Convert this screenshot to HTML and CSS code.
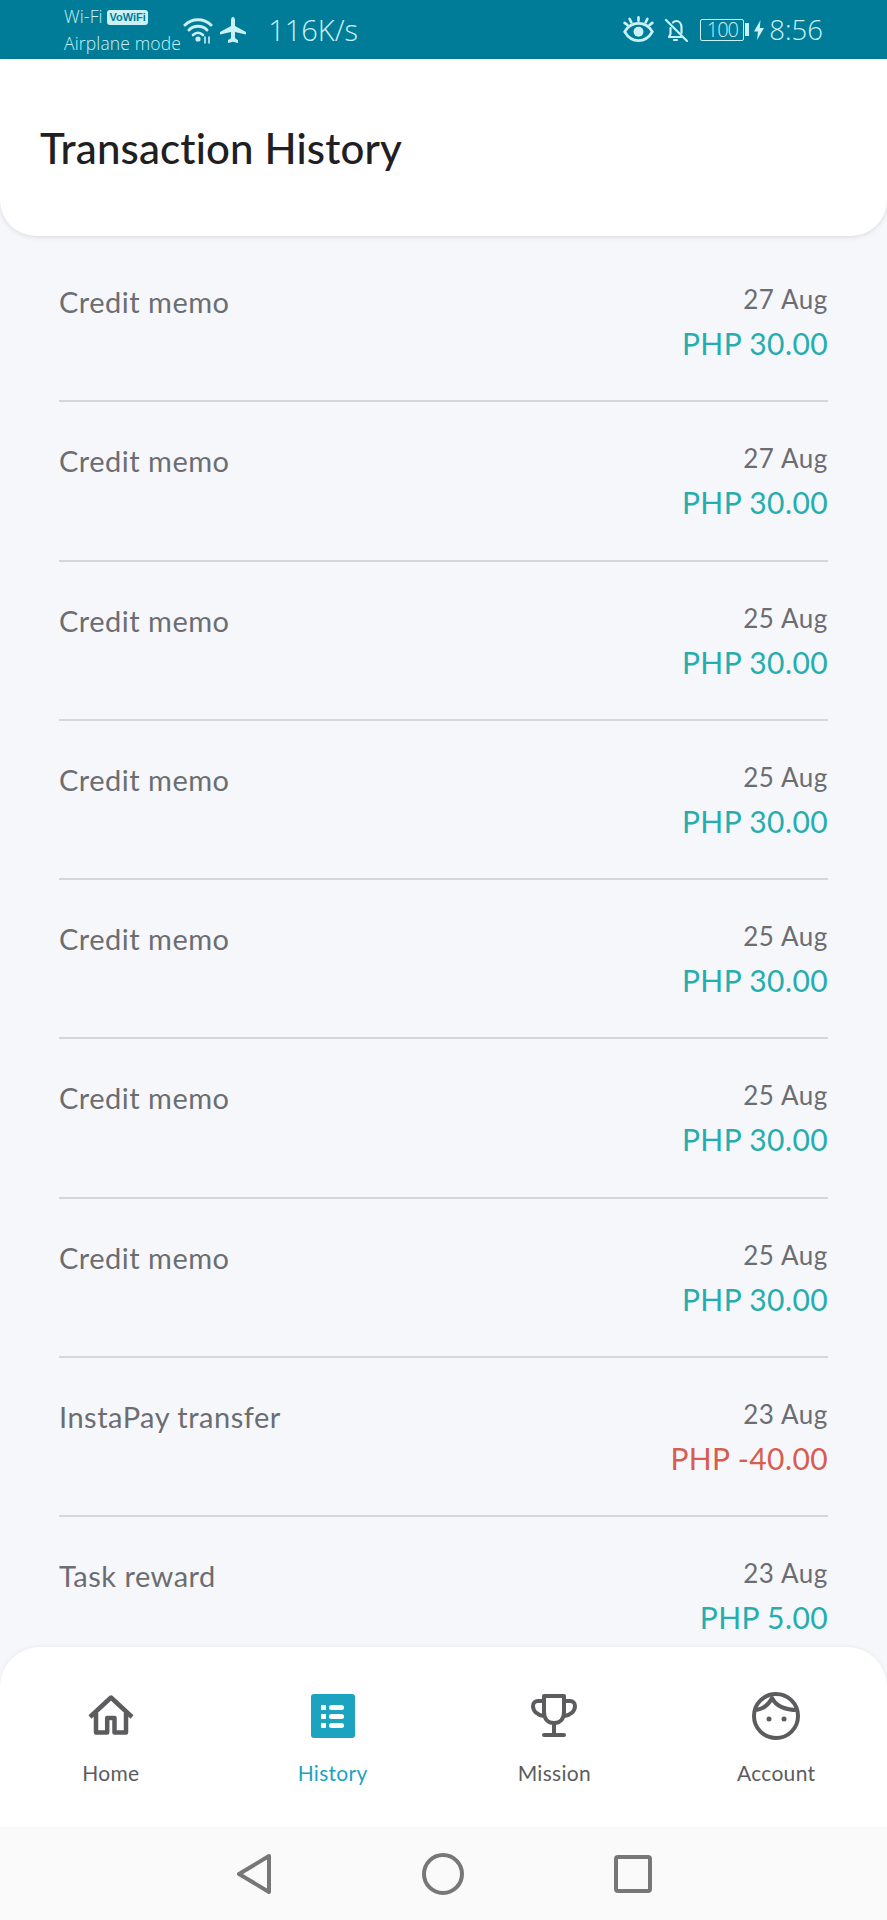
FILE: index.html
```html
<!DOCTYPE html>
<html lang="en">
<head>
    <meta charset="UTF-8">
    <meta name="viewport" content="width=device-width, initial-scale=1.0">
    <title>Transaction History</title>
    <link rel="stylesheet" href="styles.css">
</head>
<body>
    <div class="phone">
        <div class="status-bar">
            <div class="status-left">
                <div class="carrier">
                    <div class="carrier-line">Wi-Fi <span class="vowifi">VoWiFi</span></div>
                    <div class="carrier-line">Airplane mode</div>
                </div>
                <svg class="icon-wifi" viewBox="0 0 31 28" fill="none" stroke="currentColor" stroke-linecap="round">
                    <path d="M2 9C9 2 21 2 28 9" stroke-width="3"/>
                    <path d="M6 14C11 9 19 9 24 14" stroke-width="3"/>
                    <path d="M10 19C13 16 17 16 20 19" stroke-width="2.6"/>
                    <circle cx="15" cy="23" r="2.6" fill="currentColor" stroke="none"/>
                    <path d="M22 21v6M26 21v6" stroke-width="1.6"/>
                </svg>
                <svg class="icon-plane" viewBox="0 0 26 26" fill="currentColor">
                    <path d="M13 0c1.2 0 2 1.6 2 3.2V9l11 6v2.6l-11-2.6v6l3 2.2V26l-5-1.3L8 26v-2.8l3-2.2v-6L0 17.600V15l11-6V3.200C11 1.600 11.800 0 13 0z"/>
                </svg>
                <span class="speed">116K/s</span>
            </div>
            <div class="status-right">
                <svg class="icon-eye" viewBox="0 0 28 24" fill="none" stroke="currentColor" stroke-width="2.400" stroke-linecap="round">
                    <path d="M1.500 14C5 8 9 6.500 14 6.500S23 8 26.500 14C23 20 19 22 14 22S5 20 1.500 14z"/>
                    <circle cx="14" cy="14" r="4.500" fill="currentColor" stroke="none"/>
                    <path d="M14 1v3M6 2.500l1.500 3M22 2.500l-1.500 3M1.500 6l2.500 2M26.500 6L24 8"/>
                </svg>
                <svg class="icon-bell" viewBox="0 0 24 24" fill="none" stroke="currentColor" stroke-width="2.200" stroke-linecap="round" stroke-linejoin="round">
                    <path d="M5 19h13M5 19l1.500-3V10M9 4.500C10 3.500 11 3 12 3c3.500 0 5.500 3 5.500 6.500V15"/>
                    <path d="M10 22h3M2 2l21 21"/>
                </svg>
                <div class="battery">
                    <span class="battery-body">100</span>
                    <span class="battery-tip"></span>
                </div>
                <svg class="icon-bolt" viewBox="0 0 10 20" fill="currentColor">
                    <path d="M6.500 0L0 11.500h4L3 20l7-12H5.800z"/>
                </svg>
                <span class="clock">8:56</span>
            </div>
        </div>

        <header class="page-header">
            <h1>Transaction History</h1>
        </header>

        <div class="tx-list">
            <div class="tx-row">
                <div class="tx-name">Credit memo</div>
                <div class="tx-date">27 Aug</div>
                <div class="tx-amount">PHP 30.00</div>
            </div>
            <div class="tx-row">
                <div class="tx-name">Credit memo</div>
                <div class="tx-date">27 Aug</div>
                <div class="tx-amount">PHP 30.00</div>
            </div>
            <div class="tx-row">
                <div class="tx-name">Credit memo</div>
                <div class="tx-date">25 Aug</div>
                <div class="tx-amount">PHP 30.00</div>
            </div>
            <div class="tx-row">
                <div class="tx-name">Credit memo</div>
                <div class="tx-date">25 Aug</div>
                <div class="tx-amount">PHP 30.00</div>
            </div>
            <div class="tx-row">
                <div class="tx-name">Credit memo</div>
                <div class="tx-date">25 Aug</div>
                <div class="tx-amount">PHP 30.00</div>
            </div>
            <div class="tx-row">
                <div class="tx-name">Credit memo</div>
                <div class="tx-date">25 Aug</div>
                <div class="tx-amount">PHP 30.00</div>
            </div>
            <div class="tx-row">
                <div class="tx-name">Credit memo</div>
                <div class="tx-date">25 Aug</div>
                <div class="tx-amount">PHP 30.00</div>
            </div>
            <div class="tx-row">
                <div class="tx-name">InstaPay transfer</div>
                <div class="tx-date">23 Aug</div>
                <div class="tx-amount negative">PHP -40.00</div>
            </div>
            <div class="tx-row">
                <div class="tx-name">Task reward</div>
                <div class="tx-date">23 Aug</div>
                <div class="tx-amount">PHP 5.00</div>
            </div>
        </div>

        <nav class="tab-bar">
            <div class="tab">
                <svg class="tab-icon" viewBox="0 0 48 48" fill="none" stroke="currentColor" stroke-width="4.500" stroke-linejoin="round">
                    <path d="M3 25L24 5.500 45 25"/>
                    <path d="M9 21v19.500h11.200V26h7.300v14.500H39V21"/>
                </svg>
                <span>Home</span>
            </div>
            <div class="tab active">
                <svg class="tab-icon" viewBox="0 0 48 48">
                    <rect x="2" y="2" width="44" height="44" rx="3" fill="currentColor"/>
                    <g fill="#fff">
                    <rect x="12" y="13" width="5" height="5"/>
                    <rect x="12" y="22" width="5" height="5"/>
                    <rect x="12" y="31" width="5" height="5"/>
                    <rect x="20" y="13" width="15" height="5" rx="2.500"/>
                    <rect x="20" y="22" width="15" height="5" rx="2.500"/>
                    <rect x="20" y="31" width="15" height="5" rx="2.500"/>
                    </g>
                </svg>
                <span>History</span>
            </div>
            <div class="tab">
                <svg class="tab-icon" viewBox="0 0 48 48" fill="none" stroke="currentColor" stroke-width="4" stroke-linecap="round" stroke-linejoin="round">
                    <path d="M14 4h20v16c0 7-4 11-10 11s-10-4-10-11z"/>
                    <path d="M14 9H8c-3 0-5 2-5 5 0 5 4 9 11 10M34 9h6c3 0 5 2 5 5 0 5-4 9-11 10"/>
                    <path d="M24 31v12M14 43h20"/>
                </svg>
                <span>Mission</span>
            </div>
            <div class="tab">
                <svg class="tab-icon" viewBox="0 0 48 48" fill="none" stroke="currentColor" stroke-width="4">
                    <circle cx="24" cy="24" r="22"/>
                    <path d="M4 18c7-1 13-6 16-12 3 6 10 12 26 12" stroke-linejoin="round"/>
                    <circle cx="17" cy="27" r="2.500" fill="currentColor" stroke="none"/>
                    <circle cx="32" cy="27" r="2.500" fill="currentColor" stroke="none"/>
                </svg>
                <span>Account</span>
            </div>
        </nav>

        <div class="system-nav">
            <svg class="sys-back" viewBox="0 0 36 42" fill="none" stroke="currentColor" stroke-width="4" stroke-linejoin="round">
                <path d="M33 3v36L3 21z"/>
            </svg>
            <svg class="sys-home" viewBox="0 0 42 42" fill="none" stroke="currentColor" stroke-width="4">
                <circle cx="21" cy="21" r="19"/>
            </svg>
            <svg class="sys-recent" viewBox="0 0 38 38" fill="none" stroke="currentColor" stroke-width="4" stroke-linejoin="round">
                <rect x="2" y="2" width="34" height="34" rx="2"/>
            </svg>
        </div>
    </div>
</body>
</html>
```

FILE: styles.css
```css
:root {
    --teal-bar: #007c98;
    --status-text: #c9f1f6;
    --page-bg: #f6f7fb;
    --text-grey: #6c6d71;
    --green: #25adb0;
    --red: #d85c50;
    --tab-grey: #5c5c5f;
    --tab-active: #1ba3bf;
}

* {
    box-sizing: border-box;
}

body {
    margin: 0;
    font-family: Lato, "Noto Sans", sans-serif;
    background-color: var(--page-bg);
}

.phone {
    display: flex;
    flex-direction: column;
    height: 1920px;
    overflow: hidden;
}

/* status bar */
.status-bar {
    flex: 0 0 59px;
    display: flex;
    justify-content: space-between;
    align-items: center;
    padding: 0 64px;
    background-color: var(--teal-bar);
    color: var(--status-text);
    font-family: "Open Sans", sans-serif;
    font-weight: 300;
}

.status-left,
.status-right {
    display: flex;
    align-items: center;
}

.carrier {
    font-size: 17.500px;
    line-height: 27px;
    margin-top: 1px;
    letter-spacing: 0.15px;
    white-space: nowrap;
}

.vowifi {
    display: inline-block;
    padding: 0 2px;
    background-color: var(--status-text);
    color: var(--teal-bar);
    border-radius: 3px;
    font-family: "Liberation Sans", sans-serif;
    font-size: 11px;
    font-weight: 700;
    line-height: 15px;
    letter-spacing: 0;
    vertical-align: 2px;
}

.icon-wifi {
    width: 31px;
    height: 28px;
    margin-left: 2px;
}

.icon-plane {
    width: 26px;
    height: 26px;
    margin-left: 6px;
}

.speed {
    margin-left: 22px;
    font-size: 29px;
}

.icon-eye {
    width: 31px;
    height: 27px;
}

.icon-bell {
    width: 24px;
    height: 24px;
    margin-left: 10px;
}

.battery {
    display: flex;
    align-items: center;
    margin-left: 12px;
}

.battery-body {
    width: 44px;
    height: 22px;
    border: 1px solid var(--status-text);
    border-radius: 2px;
    font-size: 20px;
    line-height: 20px;
    text-align: center;
    letter-spacing: -1px;
}

.battery-tip {
    width: 4px;
    height: 13px;
    margin-left: 1px;
    background-color: var(--status-text);
}

.icon-bolt {
    width: 10px;
    height: 20px;
    margin-left: 5px;
}

.clock {
    margin-left: 5px;
    font-size: 27.500px;
}

/* header */
.page-header {
    flex: 0 0 177px;
    display: flex;
    align-items: center;
    padding: 0 40px;
    background: white;
    border-radius: 0 0 36px 36px;
    box-shadow: 0 1px 5px rgba(0,0,0,0.12);
    position: relative;
}

h1 {
    margin: 0;
    font-size: 42px;
    font-weight: 500;
    letter-spacing: 0.15px;
    color: #202022;
}

/* list */
.tx-list {
    flex: 1;
    min-height: 0;
    overflow: hidden;
    padding: 7px 59px 0;
}

.tx-row {
    display: grid;
    grid-template-columns: 1fr auto;
    grid-auto-rows: min-content;
    height: 159.25px;
    padding-top: 39px;
    border-bottom: 2px solid #d6d7da;
}

.tx-row:last-child {
    border-bottom: none;
}

.tx-name {
    margin-top: 3px;
    font-size: 29px;
    line-height: 34px;
    letter-spacing: 0.5px;
    color: var(--text-grey);
}

.tx-date {
    font-size: 26px;
    line-height: 34px;
    letter-spacing: 0.6px;
    text-align: right;
    color: var(--text-grey);
}

.tx-amount {
    grid-column: 2;
    margin-top: 7px;
    font-size: 30px;
    line-height: 34px;
    letter-spacing: 0.4px;
    text-align: right;
    color: var(--green);
}

.tx-amount.negative {
    color: var(--red);
}

/* bottom tabs */
.tab-bar {
    flex: 0 0 180px;
    display: grid;
    grid-template-columns: repeat(4, 1fr);
    padding-top: 45px;
    background: white;
    border-radius: 40px 40px 0 0;
    box-shadow: 0 -1px 4px rgba(0,0,0,0.05);
    position: relative;
}

.tab {
    display: flex;
    flex-direction: column;
    align-items: center;
    color: var(--tab-grey);
    font-size: 21px;
    letter-spacing: 0.3px;
}

.tab span {
    margin-top: 20px;
    line-height: 26px;
}

.tab.active {
    color: var(--tab-active);
}

.tab-icon {
    width: 48px;
    height: 48px;
}

/* android nav */
.system-nav {
    flex: 0 0 93px;
    display: flex;
    align-items: center;
    justify-content: center;
    gap: 150px;
    background-color: #fafafa;
    color: #777;
}

.sys-back {
    width: 36px;
    height: 42px;
}

.sys-home {
    width: 42px;
    height: 42px;
}

.sys-recent {
    width: 38px;
    height: 38px;
}
```
